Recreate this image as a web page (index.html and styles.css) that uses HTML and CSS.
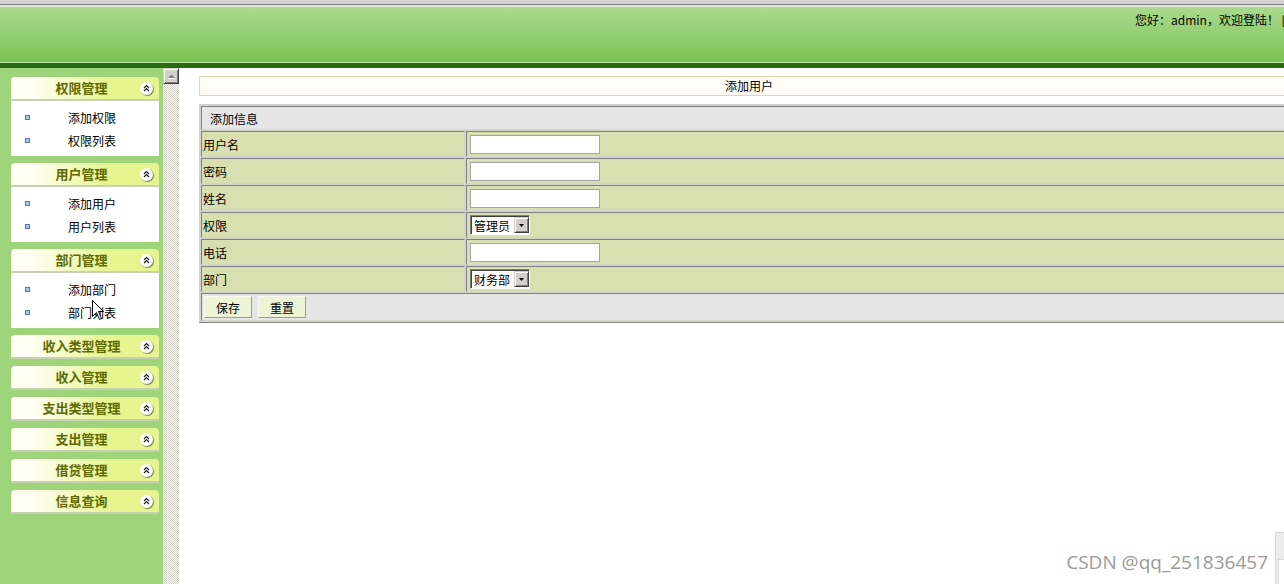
FILE: index.html
```html
<!DOCTYPE html>
<html lang="zh-CN">
<head>
  <meta charset="UTF-8" />
  <title>添加用户</title>
  <link rel="stylesheet" href="styles.css">
</head>
<body>
  <div class="topbar"></div>
  <div class="banner">
    <span class="greeting">您好：admin，欢迎登陆！ [退出]</span>
  </div>
  <div class="strip"></div>

  <div class="frame">
    <aside class="sidebar">
      <div class="panel">
        <div class="panel-hd">
          <span class="panel-title">权限管理</span>
          <span class="fold"><svg width="13" height="13" viewBox="0 0 13 13"><polyline points="4,6 6.5,3.5 9,6" /><polyline points="4,9 6.5,6.5 9,9" /></svg></span>
        </div>
        <ul class="panel-bd">
          <li><span class="dot"></span>添加权限</li>
          <li><span class="dot"></span>权限列表</li>
        </ul>
      </div>
      <div class="panel">
        <div class="panel-hd">
          <span class="panel-title">用户管理</span>
          <span class="fold"><svg width="13" height="13" viewBox="0 0 13 13"><polyline points="4,6 6.5,3.5 9,6" /><polyline points="4,9 6.5,6.5 9,9" /></svg></span>
        </div>
        <ul class="panel-bd">
          <li><span class="dot"></span>添加用户</li>
          <li><span class="dot"></span>用户列表</li>
        </ul>
      </div>
      <div class="panel">
        <div class="panel-hd">
          <span class="panel-title">部门管理</span>
          <span class="fold"><svg width="13" height="13" viewBox="0 0 13 13"><polyline points="4,6 6.5,3.5 9,6" /><polyline points="4,9 6.5,6.5 9,9" /></svg></span>
        </div>
        <ul class="panel-bd">
          <li><span class="dot"></span>添加部门</li>
          <li><span class="dot"></span>部门列表</li>
        </ul>
      </div>
      <div class="panel">
        <div class="panel-hd">
          <span class="panel-title">收入类型管理</span>
          <span class="fold"><svg width="13" height="13" viewBox="0 0 13 13"><polyline points="4,6 6.5,3.5 9,6" /><polyline points="4,9 6.5,6.5 9,9" /></svg></span>
        </div>
      </div>
      <div class="panel">
        <div class="panel-hd">
          <span class="panel-title">收入管理</span>
          <span class="fold"><svg width="13" height="13" viewBox="0 0 13 13"><polyline points="4,6 6.5,3.5 9,6" /><polyline points="4,9 6.5,6.5 9,9" /></svg></span>
        </div>
      </div>
      <div class="panel">
        <div class="panel-hd">
          <span class="panel-title">支出类型管理</span>
          <span class="fold"><svg width="13" height="13" viewBox="0 0 13 13"><polyline points="4,6 6.5,3.5 9,6" /><polyline points="4,9 6.5,6.5 9,9" /></svg></span>
        </div>
      </div>
      <div class="panel">
        <div class="panel-hd">
          <span class="panel-title">支出管理</span>
          <span class="fold"><svg width="13" height="13" viewBox="0 0 13 13"><polyline points="4,6 6.5,3.5 9,6" /><polyline points="4,9 6.5,6.5 9,9" /></svg></span>
        </div>
      </div>
      <div class="panel">
        <div class="panel-hd">
          <span class="panel-title">借贷管理</span>
          <span class="fold"><svg width="13" height="13" viewBox="0 0 13 13"><polyline points="4,6 6.5,3.5 9,6" /><polyline points="4,9 6.5,6.5 9,9" /></svg></span>
        </div>
      </div>
      <div class="panel">
        <div class="panel-hd">
          <span class="panel-title">信息查询</span>
          <span class="fold"><svg width="13" height="13" viewBox="0 0 13 13"><polyline points="4,6 6.5,3.5 9,6" /><polyline points="4,9 6.5,6.5 9,9" /></svg></span>
        </div>
      </div>
    </aside>

    <div class="scrollbar">
      <div class="scroll-up">
        <svg width="7" height="5" viewBox="0 0 7 5"><polygon points="0,4 3.5,0.5 7,4" fill="#808080" /><line x1="0" y1="4.5" x2="7" y2="4.5" stroke="#fff" /></svg>
      </div>
    </div>

    <main class="content">
      <div class="caption">添加用户</div>
      <form>
        <table class="form">
          <tr><td class="group" colspan="2">添加信息</td></tr>
          <tr>
            <td class="label">用户名</td>
            <td><input class="txt" type="text" /></td>
          </tr>
          <tr>
            <td class="label">密码</td>
            <td><input class="txt" type="password" /></td>
          </tr>
          <tr>
            <td class="label">姓名</td>
            <td><input class="txt" type="text" /></td>
          </tr>
          <tr>
            <td class="label">权限</td>
            <td>
              <span class="sel">
                <select><option>管理员</option><option>普通用户</option></select>
                <span class="sel-btn"><svg width="5" height="3" viewBox="0 0 5 3"><polygon points="0,0 5,0 2.5,3" fill="#000" /></svg></span>
              </span>
            </td>
          </tr>
          <tr>
            <td class="label">电话</td>
            <td><input class="txt" type="text" /></td>
          </tr>
          <tr>
            <td class="label">部门</td>
            <td>
              <span class="sel">
                <select><option>财务部</option><option>人事部</option></select>
                <span class="sel-btn"><svg width="5" height="3" viewBox="0 0 5 3"><polygon points="0,0 5,0 2.5,3" fill="#000" /></svg></span>
              </span>
            </td>
          </tr>
          <tr>
            <td class="actions" colspan="2">
              <div class="btns">
                <button type="submit" class="btn">保存</button>
                <button type="reset" class="btn">重置</button>
              </div>
            </td>
          </tr>
        </table>
      </form>
    </main>
  </div>

  <div class="corner"><span></span></div>
  <div class="watermark">CSDN @qq_251836457</div>
  <svg class="cursor" width="13" height="21" viewBox="0 0 13 21"><path d="M0.5,0.5 L0.5,16.5 L4.5,12.5 L7.5,19.5 L9.5,18.5 L6.5,11.5 L11.5,11.5 Z" fill="#fff" stroke="#000" /></svg>
</body>
</html>
```

FILE: styles.css
```css
body {
  margin: 0;
  height: 584px;
  overflow: hidden;
  position: relative;
  font-family: "Noto Sans CJK SC", sans-serif;
  font-size: 12px;
  color: #000;
  background: #fff;
}

.topbar {
  height: 4px;
  background: #d6d3ce;
  border-bottom: 1px solid #808080;
}

.banner {
  height: 49px;
  padding: 6px 0 0 1135px;
  border-top: 2px solid #e2e4dc;
  border-bottom: 1px solid #c6eaae;
  background: linear-gradient(#a9da8c, #9ad27c 35%, #7cc352);
  white-space: nowrap;
  overflow: hidden;
  line-height: 14px;
}

.strip {
  height: 5px;
  background: #2a6b12;
}

.frame {
  display: flex;
  height: 516px;
}

/* left menu */
.sidebar {
  width: 148px;
  flex-shrink: 0;
  padding: 9px 4px 0 11px;
  background: #9fd57a;
}

.panel {
  margin-bottom: 7px;
}

.panel-hd {
  height: 22px;
  display: flex;
  align-items: center;
  border-bottom: 2px solid #c9cfb5;
  border-radius: 4px 4px 0 0;
  background: linear-gradient(90deg, #fffff2 15%, #e6f58f 65%);
}

.panel-title {
  flex: 1;
  padding: 0 0 2px 12px;
  text-align: center;
  font-size: 13px;
  font-weight: bold;
  color: #5e6a00;
}

.fold {
  width: 13px;
  height: 13px;
  margin-right: 6px;
  border-radius: 50%;
  background: #fff;
  box-shadow: 1px 1px 1px rgba(0, 0, 0, 0.45);
  display: flex;
}

.fold polyline {
  fill: none;
  stroke: #222;
  stroke-width: 1.2;
}

.panel-bd {
  list-style: none;
  margin: 0;
  padding: 5px 0 4px;
  background: #fff;
}

.panel-bd li {
  height: 23px;
  display: flex;
  align-items: center;
  gap: 38px;
  padding-left: 14px;
}

.dot {
  width: 5px;
  height: 5px;
  box-sizing: border-box;
  border: 1px solid #4f74b8;
  background: #a9c8f2;
}

/* fake frame scrollbar */
.scrollbar {
  width: 16px;
  flex-shrink: 0;
  background: repeating-conic-gradient(#d4d0c8 0 25%, #fff 0 50%) 0 0 / 2px 2px;
}

.scroll-up {
  height: 16px;
  box-sizing: border-box;
  background: #d4d0c8;
  border: 1px solid;
  border-color: #d4d0c8 #404040 #404040 #d4d0c8;
  box-shadow: inset 1px 1px #fff, inset -1px -1px #808080;
  display: flex;
  align-items: center;
  justify-content: center;
}

/* main area */
.content {
  flex: 1;
  min-width: 0;
  overflow: hidden;
  padding: 8px 0 0 20px;
}

.caption {
  width: 1098px;
  height: 18px;
  line-height: 18px;
  border: 1px solid #d7dcae;
  border-right: 0;
  background: #fffcf6;
  text-align: center;
}

form {
  margin: 0;
}

.form {
  width: 1098px;
  margin-top: 8px;
  border-collapse: separate;
  border-spacing: 1px;
  border: 1px solid;
  border-color: #d0d0cc #808080 #808080 #d0d0cc;
  background: #d4d4cc;
}

.form td {
  height: 24px;
  padding: 0 1px;
  border: 1px solid;
  border-color: #808080 #d4d4cc #d4d4cc #808080;
  background: #d8dfb1;
  vertical-align: middle;
}

.form td.label {
  width: 260px;
}

.form td.group {
  height: 22px;
  padding-left: 8px;
  background: #e6e6e6;
}

.form td.actions {
  height: 26px;
  padding-left: 2px;
  background: #e6e6e6;
}

.txt {
  width: 130px;
  height: 19px;
  box-sizing: border-box;
  margin: 0 0 0 2px;
  padding: 0 2px;
  border: 1px solid #a4a4a4;
  font: inherit;
  vertical-align: middle;
  background: #fff;
}

.sel {
  position: relative;
  display: inline-block;
  width: 60px;
  height: 20px;
  box-sizing: border-box;
  margin-left: 2px;
  vertical-align: middle;
  border: 1px solid;
  border-color: #808080 #fff #fff #808080;
  box-shadow: inset 1px 1px #404040;
  background: #fff;
}

.sel select {
  appearance: none;
  width: 100%;
  height: 100%;
  margin: 0;
  padding: 0 0 0 3px;
  border: 0;
  outline: 0;
  font: inherit;
  color: #000;
  background: transparent;
}

.sel-btn {
  position: absolute;
  top: 1px;
  right: 0;
  width: 15px;
  height: 16px;
  box-sizing: border-box;
  background: #d4d0c8;
  border: 1px solid;
  border-color: #d4d0c8 #404040 #404040 #d4d0c8;
  box-shadow: inset 1px 1px #fff, inset -1px -1px #808080;
  display: flex;
  align-items: center;
  justify-content: center;
  pointer-events: none;
}

.btns {
  display: flex;
  gap: 6px;
}

.btn {
  width: 48px;
  height: 22px;
  padding: 0;
  border: 1px solid;
  border-color: #fafaf2 #9c9c9c #9c9c9c #fafaf2;
  background: #eef5d6;
  font: inherit;
  color: #000;
}

/* overlays */
.corner {
  position: absolute;
  right: 0;
  bottom: 0;
  width: 8px;
  height: 51px;
  border-top: 1px solid #d8d8d8;
  border-left: 1px solid #d8d8d8;
  background: #ececec;
}

.corner span {
  display: block;
  margin: 26px 0 0 2px;
  height: 25px;
  border-top: 1px solid #d8d8d8;
  border-left: 1px solid #d8d8d8;
  background: #fff;
}

.watermark {
  position: absolute;
  right: 16px;
  bottom: 13px;
  font-family: "Open Sans", sans-serif;
  font-size: 19px;
  line-height: 18px;
  color: #9a9a9a;
  text-shadow: 0 0 2px #fff;
}

.cursor {
  position: absolute;
  left: 92px;
  top: 300px;
}
```
